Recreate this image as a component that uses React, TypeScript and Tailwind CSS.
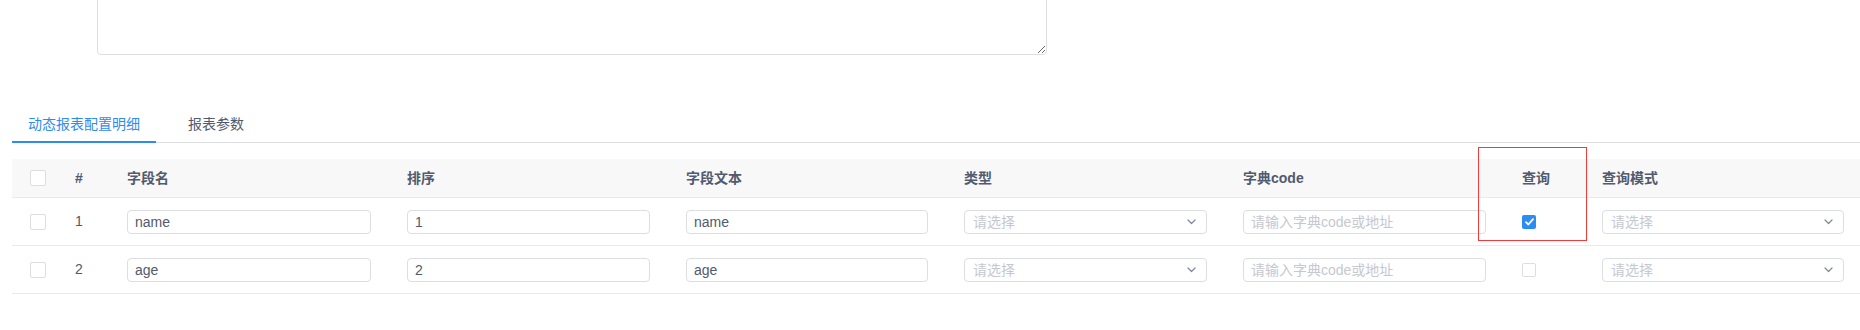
import React from "react";

const cols = ["w-[45px]", "w-[52px]", "w-[280px]", "w-[279px]", "w-[278px]", "w-[279px]", "w-[279px]", "w-[80px]", "w-[278px]"];

const rows = [
  { no: 1, field: "name", order: "1", text: "name", query: true },
  { no: 2, field: "age", order: "2", text: "age", query: false },
];

function Box({ size = 16 }: { size?: number }) {
  return (
    <span
      className={`block rounded-[2px] border border-[#dcdee2] bg-white ${size === 16 ? "h-4 w-4" : "h-[14px] w-[14px]"}`}
    />
  );
}

function Checked() {
  return (
    <span className="flex h-[14px] w-[14px] items-center justify-center rounded-[2px] bg-[#2d8cf0]">
      <svg width="9" height="8" viewBox="0 0 9 8" fill="none">
        <path d="M1 4.2 3.4 6.5 8 1.2" stroke="#fff" strokeWidth="1.8" strokeLinecap="round" strokeLinejoin="round" />
      </svg>
    </span>
  );
}

function TextInput({ value, placeholder }: { value?: string; placeholder?: string }) {
  return (
    <input
      readOnly
      value={value ?? ""}
      placeholder={placeholder}
      className="h-6 w-full rounded-[4px] border border-[#dcdee2] bg-white px-[7px] text-[14px] text-[#515a6e] outline-none placeholder:text-[#c5c8ce]"
    />
  );
}

function Select() {
  return (
    <div className="flex h-6 w-full items-center justify-between rounded-[4px] border border-[#dcdee2] bg-white pl-[8px] pr-[10px]">
      <span className="text-[14px] leading-none text-[#c5c8ce]">请选择</span>
      <svg width="9" height="6" viewBox="0 0 9 6" fill="none">
        <path d="M1 1 4.5 4.5 8 1" stroke="#808695" strokeWidth="1.2" strokeLinecap="round" strokeLinejoin="round" />
      </svg>
    </div>
  );
}

export default function App() {
  const headers = ["", "#", "字段名", "排序", "字段文本", "类型", "字典code", "查询", "查询模式"];

  return (
    <div className="relative h-[330px] w-[1860px] overflow-hidden bg-white font-['Liberation_Sans','Noto_Sans_CJK_SC',sans-serif] text-[#515a6e]">
      {/* description textarea, only its lower part is in view */}
      <div className="flex h-[55px] items-end overflow-hidden">
        <textarea
          readOnly
          className="ml-[97px] h-[120px] w-[950px] shrink-0 rounded-[4px] border border-[#dcdee2] bg-white outline-none"
        />
      </div>

      <div className="mt-[51px] pl-3">
        {/* tabs */}
        <div className="flex border-b border-[#dcdee2]">
          <div className="-mb-px border-b-2 border-[#2d8cf0] px-4 pt-2 pb-[6px] text-[14px] leading-[21px] text-[#2d8cf0]">
            动态报表配置明细
          </div>
          <div className="-mb-px ml-4 border-b-2 border-transparent px-4 pt-2 pb-[6px] text-[14px] leading-[21px]">
            报表参数
          </div>
        </div>

        {/* table */}
        <div className="mt-4 overflow-hidden">
          <div className="flex h-[39px] w-max items-center border-b border-[#e8eaec] bg-[#f8f8f9] text-[14px] font-bold">
            {headers.map((h, i) => (
              <div key={i} className={`${cols[i]} shrink-0 px-[18px]`}>
                {i === 0 ? <Box /> : h}
              </div>
            ))}
          </div>

          {rows.map((r) => (
            <div key={r.no} className="flex h-12 w-max items-center border-b border-[#e8eaec] text-[14px]">
              <div className={`${cols[0]} shrink-0 px-[18px]`}>
                <Box />
              </div>
              <div className={`${cols[1]} shrink-0 px-[18px]`}>{r.no}</div>
              <div className={`${cols[2]} shrink-0 px-[18px]`}>
                <TextInput value={r.field} />
              </div>
              <div className={`${cols[3]} shrink-0 px-[18px]`}>
                <TextInput value={r.order} />
              </div>
              <div className={`${cols[4]} shrink-0 px-[18px]`}>
                <TextInput value={r.text} />
              </div>
              <div className={`${cols[5]} shrink-0 px-[18px]`}>
                <Select />
              </div>
              <div className={`${cols[6]} shrink-0 px-[18px]`}>
                <TextInput placeholder="请输入字典code或地址" />
              </div>
              <div className={`${cols[7]} shrink-0 px-[18px]`}>
                {r.query ? <Checked /> : <Box size={14} />}
              </div>
              <div className={`${cols[8]} shrink-0 px-[18px]`}>
                <Select />
              </div>
            </div>
          ))}
        </div>
      </div>

      {/* red annotation box */}
      <div className="absolute left-[1478px] top-[147px] h-[94px] w-[109px] border border-[#f23c3c]" />
    </div>
  );
}
